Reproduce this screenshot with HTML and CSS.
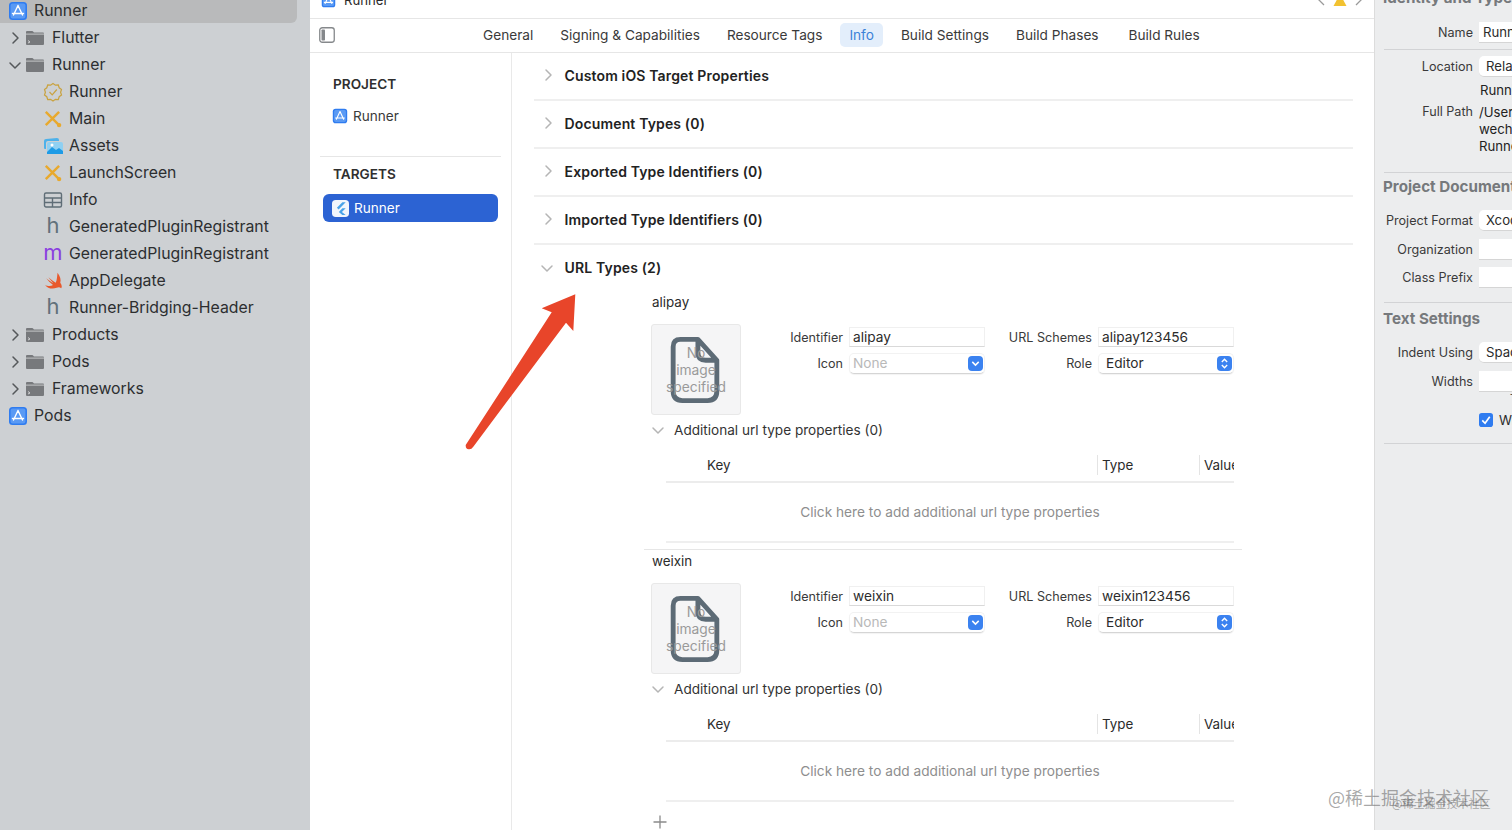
FILE: index.html
```html
<!DOCTYPE html>
<html lang="en">
<head>
    <meta charset="UTF-8">
    <title>Runner - Info</title>
    <link rel="stylesheet" href="styles.css">
</head>
<body>
    <svg class="defs" width="0" height="0">
        <symbol id="i-app" viewBox="0 0 20 20">
            <rect x="1" y="1" width="18" height="18" rx="3.5" fill="#2f7cf0"/>
            <rect x="2.6" y="2.6" width="14.8" height="14.8" rx="2" fill="#5a9af4"/>
            <path d="M10 4.5 L5.5 14 M10 4.5 L14.5 14 M4.5 12.5 H15.5" stroke="#fff" stroke-width="1.4" fill="none" stroke-linecap="round"/>
        </symbol>
        <symbol id="i-folder" viewBox="0 0 18 16">
            <path d="M0 2 Q0 1 1 1 H6 Q7 1 7.5 2 L8 2.5 H17 Q18 2.5 18 3.5 V14 Q18 15 17 15 H1 Q0 15 0 14 Z" fill="#77797c"/>
            <rect x="0" y="3.6" width="18" height="1" fill="#c5c7c9"/>
        </symbol>
        <symbol id="i-folder-t" viewBox="0 0 18 16">
            <use href="#i-folder"/>
            <path d="M2 10.5 L4 12 L2 13" stroke="#d8d9da" stroke-width="0.9" fill="none"/>
        </symbol>
        <symbol id="i-cross" viewBox="0 0 18 18">
            <path d="M2.5 2.5 L14 14 M14.5 2.5 L2.5 14.5" stroke="#e8a92e" stroke-width="2.2" fill="none"/>
            <circle cx="14.5" cy="14.5" r="2" fill="#e8a92e"/>
        </symbol>
        <symbol id="i-chev-r" viewBox="0 0 10 14">
            <path d="M3 2 L8 7 L3 12" fill="none" stroke="currentColor" stroke-width="1.5" stroke-linecap="round" stroke-linejoin="round"/>
        </symbol>
        <symbol id="i-chev-d" viewBox="0 0 14 10">
            <path d="M2 3 L7 8 L12 3" fill="none" stroke="currentColor" stroke-width="1.5" stroke-linecap="round" stroke-linejoin="round"/>
        </symbol>
        <symbol id="i-file" viewBox="0 0 50 68">
            <path d="M10 2.5 H28 L47.5 24 V56 Q47.5 65.5 38 65.5 H12 Q2.5 65.5 2.5 56 V10 Q2.5 2.5 10 2.5 Z M28 2.5 V16 Q28 24 36 24 H47.5" fill="none" stroke="#5d6b76" stroke-width="5" stroke-linejoin="round"/>
        </symbol>
    </svg>

    <div class="window">
        <!-- Navigator -->
        <aside class="sidebar">
            <div class="tree">
                <div class="row selected lvl0"><svg class="ic"><use href="#i-app"/></svg><span>Runner</span></div>
                <div class="row lvl1"><svg class="chev"><use href="#i-chev-r"/></svg><svg class="ic-folder"><use href="#i-folder-t"/></svg><span>Flutter</span></div>
                <div class="row lvl1"><svg class="chev-d"><use href="#i-chev-d"/></svg><svg class="ic-folder"><use href="#i-folder"/></svg><span>Runner</span></div>
                <div class="row lvl2">
                    <svg class="ic" viewBox="0 0 20 20"><path d="M10 1.5 L12.4 3.2 L15.3 3 L16.2 5.8 L18.5 7.5 L17.6 10.3 L18.5 13 L16.2 14.7 L15.3 17.5 L12.4 17.3 L10 19 L7.6 17.3 L4.7 17.5 L3.8 14.7 L1.5 13 L2.4 10.3 L1.5 7.5 L3.8 5.8 L4.7 3 L7.6 3.2 Z" fill="none" stroke="#c9a23f" stroke-width="1.2"/><path d="M6.5 10 L9.2 12.8 L13.8 7.5" fill="none" stroke="#c9a23f" stroke-width="1.2"/></svg>
                    <span>Runner</span>
                </div>
                <div class="row lvl2"><svg class="ic"><use href="#i-cross"/></svg><span>Main</span></div>
                <div class="row lvl2">
                    <svg class="ic" viewBox="0 0 20 20"><path d="M1 5 Q1 3 3 3 L14 2 Q16 2 16 4 V5 H5 Q3 5 3 7 V13 H2 Q1 13 1 12 Z" fill="#4db1ea"/><rect x="4" y="6" width="16" height="12" rx="2" fill="#8fd0f2"/><path d="M4 16 L9 11 L13 14 L16 12 L20 15 V18 H4 Z" fill="#1e9be6"/><circle cx="9" cy="9" r="1.5" fill="#fff"/></svg>
                    <span>Assets</span>
                </div>
                <div class="row lvl2"><svg class="ic"><use href="#i-cross"/></svg><span>LaunchScreen</span></div>
                <div class="row lvl2">
                    <svg class="ic" viewBox="0 0 20 20"><rect x="1.5" y="3" width="17" height="14" rx="1.5" fill="none" stroke="#5f6d77" stroke-width="1.4"/><path d="M1.5 8 H18.5 M1.5 12.5 H18.5 M9.5 8 V17" stroke="#5f6d77" stroke-width="1.4"/></svg>
                    <span>Info</span>
                </div>
                <div class="row lvl2"><b class="letter h">h</b><span>GeneratedPluginRegistrant</span></div>
                <div class="row lvl2"><b class="letter m">m</b><span>GeneratedPluginRegistrant</span></div>
                <div class="row lvl2">
                    <svg class="ic" viewBox="0 0 22 20"><path d="M16 1 C19 5 20 9 19 12 C21 15 21 17 20 18 C18.5 16.5 17 16.5 15 17.5 C10 19.5 5 18 2 14 C5 16 8.5 16 11 14.5 C8 12 5.5 9.5 3.5 7 C6.5 9.5 9 11 11.5 12.5 C9.5 10.5 7.5 8 6 6 C9 8.5 12 11 14 12 C15.5 9 15.5 5 16 1 Z" fill="#e8592c"/></svg>
                    <span>AppDelegate</span>
                </div>
                <div class="row lvl2"><b class="letter h">h</b><span>Runner-Bridging-Header</span></div>
                <div class="row lvl1"><svg class="chev"><use href="#i-chev-r"/></svg><svg class="ic-folder"><use href="#i-folder-t"/></svg><span>Products</span></div>
                <div class="row lvl1"><svg class="chev"><use href="#i-chev-r"/></svg><svg class="ic-folder"><use href="#i-folder"/></svg><span>Pods</span></div>
                <div class="row lvl1"><svg class="chev"><use href="#i-chev-r"/></svg><svg class="ic-folder"><use href="#i-folder-t"/></svg><span>Frameworks</span></div>
                <div class="row lvl0"><svg class="ic"><use href="#i-app"/></svg><span>Pods</span></div>
            </div>
        </aside>

        <!-- Editor -->
        <main class="editor">
            <div class="jump-bar">
                <div class="crumb"><svg class="crumb-icon"><use href="#i-app"/></svg><span>Runner</span></div>
                <div class="jump-right">
                    <svg class="nav-chev" viewBox="0 0 10 14"><path d="M8 2 L3 7 L8 12" fill="none" stroke="#9a9a9a" stroke-width="1.3"/></svg>
                    <svg class="warn" viewBox="0 0 14 14"><path d="M7 1 L13.5 13 H0.5 Z" fill="#f2c230"/></svg>
                    <svg class="nav-chev" viewBox="0 0 10 14"><path d="M2 2 L7 7 L2 12" fill="none" stroke="#9a9a9a" stroke-width="1.3"/></svg>
                </div>
            </div>
            <div class="tab-bar">
                <svg class="toggle" viewBox="0 0 16 16"><rect x="0.75" y="0.75" width="14.5" height="14.5" rx="2.5" fill="#fff" stroke="#85888b" stroke-width="1.3"/><rect x="2.5" y="2.5" width="3.5" height="11" rx="0.8" fill="#85888b"/></svg>
                <nav class="tabs">
                    <a>General</a>
                    <a>Signing &amp; Capabilities</a>
                    <a>Resource Tags</a>
                    <a class="active">Info</a>
                    <a>Build Settings</a>
                    <a>Build Phases</a>
                    <a>Build Rules</a>
                </nav>
            </div>
            <div class="editor-body">
                <div class="targets">
                    <h4 class="group-title">PROJECT</h4>
                    <div class="target"><svg class="target-icon"><use href="#i-app"/></svg><span>Runner</span></div>
                    <div class="group-sep"></div>
                    <h4 class="group-title">TARGETS</h4>
                    <div class="target current">
                        <svg class="flutter" viewBox="0 0 18 18"><rect width="18" height="18" rx="4" fill="#f2f6fc"/><path d="M11 2.5 H14.5 L7 10 L5.2 8.3 Z M11 8.7 H14.5 L10.5 12.7 L14.5 16 H11 L7.2 12.7 Z" fill="#4aa3e8"/></svg>
                        <span>Runner</span>
                    </div>
                </div>

                <div class="detail">
                    <div class="section"><svg class="sec-chev"><use href="#i-chev-r"/></svg><strong>Custom iOS Target Properties</strong></div>
                    <div class="section"><svg class="sec-chev"><use href="#i-chev-r"/></svg><strong>Document Types (0)</strong></div>
                    <div class="section"><svg class="sec-chev"><use href="#i-chev-r"/></svg><strong>Exported Type Identifiers (0)</strong></div>
                    <div class="section"><svg class="sec-chev"><use href="#i-chev-r"/></svg><strong>Imported Type Identifiers (0)</strong></div>
                    <div class="section open"><svg class="sec-chev-d"><use href="#i-chev-d"/></svg><strong>URL Types (2)</strong></div>

                    <div class="url-type">
                        <div class="url-name">alipay</div>
                        <div class="url-main">
                            <div class="image-box">
                                <svg class="file-icon"><use href="#i-file"/></svg>
                                <div class="no-image">No<br>image<br>specified</div>
                            </div>
                            <div class="url-form">
                                <label>Identifier</label><div class="field">alipay</div>
                                <label>URL Schemes</label><div class="field">alipay123456</div>
                                <label>Icon</label>
                                <div class="field select muted">None<i class="stepper"><svg viewBox="0 0 14 14"><path d="M4 5.5 L7 8.5 L10 5.5" fill="none" stroke="#fff" stroke-width="1.4"/></svg></i></div>
                                <label>Role</label>
                                <div class="field select pad">Editor<i class="stepper"><svg viewBox="0 0 14 14"><path d="M4.5 5.5 L7 3 L9.5 5.5 M4.5 8.5 L7 11 L9.5 8.5" fill="none" stroke="#fff" stroke-width="1.3"/></svg></i></div>
                            </div>
                        </div>
                        <div class="additional"><svg class="add-chev"><use href="#i-chev-d"/></svg><span>Additional url type properties (0)</span></div>
                        <div class="props">
                            <div class="props-head">
                                <div class="col-key">Key</div>
                                <div class="col-type">Type</div>
                                <div class="col-value">Value</div>
                            </div>
                            <div class="props-empty">Click here to add additional url type properties</div>
                        </div>
                    </div>

                    <div class="url-type">
                        <div class="url-name">weixin</div>
                        <div class="url-main">
                            <div class="image-box">
                                <svg class="file-icon"><use href="#i-file"/></svg>
                                <div class="no-image">No<br>image<br>specified</div>
                            </div>
                            <div class="url-form">
                                <label>Identifier</label><div class="field">weixin</div>
                                <label>URL Schemes</label><div class="field">weixin123456</div>
                                <label>Icon</label>
                                <div class="field select muted">None<i class="stepper"><svg viewBox="0 0 14 14"><path d="M4 5.5 L7 8.5 L10 5.5" fill="none" stroke="#fff" stroke-width="1.4"/></svg></i></div>
                                <label>Role</label>
                                <div class="field select pad">Editor<i class="stepper"><svg viewBox="0 0 14 14"><path d="M4.5 5.5 L7 3 L9.5 5.5 M4.5 8.5 L7 11 L9.5 8.5" fill="none" stroke="#fff" stroke-width="1.3"/></svg></i></div>
                            </div>
                        </div>
                        <div class="additional"><svg class="add-chev"><use href="#i-chev-d"/></svg><span>Additional url type properties (0)</span></div>
                        <div class="props">
                            <div class="props-head">
                                <div class="col-key">Key</div>
                                <div class="col-type">Type</div>
                                <div class="col-value">Value</div>
                            </div>
                            <div class="props-empty">Click here to add additional url type properties</div>
                        </div>
                    </div>
                    <svg class="plus" viewBox="0 0 14 14"><path d="M7 0.5 V13.5 M0.5 7 H13.5" stroke="#8a8a8a" stroke-width="1.3"/></svg>
                </div>
            </div>
        </main>

        <!-- Inspector -->
        <aside class="inspector">
            <h3 class="insp-title first">Identity and Type</h3>
            <div class="insp-row name-row"><label>Name</label><div class="insp-field">Runner</div></div>
            <div class="insp-sep"></div>
            <div class="insp-row loc-row"><label>Location</label><div class="insp-field round">Relative to Group</div></div>
            <div class="insp-text run-line">Runner</div>
            <div class="insp-row path-row">
                <label>Full Path</label>
                <div class="insp-text">/Users/<br>wechat/<br>Runner</div>
            </div>
            <div class="insp-sep sep-a"></div>
            <h3 class="insp-title">Project Document</h3>
            <div class="insp-row fmt-row"><label>Project Format</label><div class="insp-field round">Xcode 9.3</div></div>
            <div class="insp-row org-row"><label>Organization</label><div class="insp-field"></div></div>
            <div class="insp-row org-row"><label>Class Prefix</label><div class="insp-field"></div></div>
            <div class="insp-sep sep-b"></div>
            <h3 class="insp-title">Text Settings</h3>
            <div class="insp-row fmt-row"><label>Indent Using</label><div class="insp-field round">Spaces</div></div>
            <div class="insp-row org-row"><label>Widths</label><div class="insp-field"></div></div>
            <div class="tab-hint">Tab</div>
            <div class="check-row">
                <svg class="check" viewBox="0 0 15 15"><rect width="15" height="15" rx="3" fill="#2f7cf0"/><path d="M3.5 8 L6.5 11 L11.5 4" fill="none" stroke="#fff" stroke-width="1.8"/></svg>
                <span>Wrap lines</span>
            </div>
            <div class="insp-sep sep-c"></div>
        </aside>
    </div>

    <!-- Red annotation arrow drawn over the screenshot -->
    <svg class="arrow" viewBox="460 290 120 165"><path d="M575.3 294.3 L541.7 308.3 L551.7 312.3 L465.7 445 Q465.5 449.5 469 449.3 Q471.5 449.5 473.3 446.7 L566 322.7 L573.3 331 Z" fill="#e8452a"/></svg>

    <div class="mark mark-big">@稀土掘金技术社区</div>
    <div class="mark mark-small">@稀土掘金技术社区</div>
</body>
</html>
```

FILE: styles.css
```css
* {
    margin: 0;
    padding: 0;
    box-sizing: border-box;
}

html, body {
    width: 1512px;
    height: 830px;
    overflow: hidden;
}

body {
    font-family: Inter, "Noto Sans CJK SC", sans-serif;
    font-size: 13.2px;
    color: #2b2b2b;
    background-color: #fff;
    position: relative;
}

.defs {
    position: absolute;
}

.window {
    display: flex;
    height: 830px;
}

/* Navigator */
.sidebar {
    width: 310px;
    flex: none;
    background-color: #cdd0d3;
    overflow: hidden;
}

.tree {
    margin-top: -2px;
    padding-right: 13px;
}

.row {
    display: flex;
    align-items: center;
    height: 27px;
    font-size: 15.8px;
    color: #2c2e30;
}

.row.selected {
    height: 25px;
    margin-bottom: 1px;
    background-color: #b9babb;
    border-radius: 0 0 6px 0;
}

.lvl0 {
    padding-left: 8px;
}

.lvl0 .ic {
    margin-right: 6px;
}

.lvl1 {
    padding-left: 10px;
}

.lvl2 {
    padding-left: 43px;
}

.lvl2 .ic, .letter {
    width: 20px;
    margin-right: 6px;
}

.ic {
    width: 20px;
    height: 20px;
    flex: none;
}

.chev, .chev-d {
    color: #55585b;
    flex: none;
}

.chev {
    width: 10px;
    height: 14px;
}

.chev-d {
    width: 14px;
    height: 10px;
    margin-left: -2px;
    margin-right: -2px;
}

.ic-folder {
    width: 18px;
    height: 16px;
    margin: 0 8px 0 6px;
    flex: none;
}

.letter {
    display: block;
    font-size: 22px;
    font-weight: 400;
    text-align: center;
    line-height: 27px;
    margin-top: -3px;
}

.letter.h {
    color: #62717b;
}

.letter.m {
    color: #8a3fe0;
}

/* Editor */
.editor {
    flex: 1;
    min-width: 0;
    display: flex;
    flex-direction: column;
    background-color: #fff;
}

.jump-bar {
    height: 19px;
    flex: none;
    display: flex;
    justify-content: space-between;
    align-items: flex-end;
    padding: 0 10px 9px 11px;
    border-bottom: 1px solid #e6e6e6;
    overflow: hidden;
}

.crumb {
    display: flex;
    align-items: center;
    gap: 8px;
    height: 18px;
    flex: none;
}

.crumb-icon {
    width: 15px;
    height: 15px;
}

.jump-right {
    display: flex;
    align-items: center;
    gap: 7px;
    height: 18px;
    flex: none;
}

.nav-chev {
    width: 10px;
    height: 14px;
}

.warn {
    width: 14px;
    height: 14px;
}

.tab-bar {
    height: 34px;
    flex: none;
    display: flex;
    align-items: center;
    padding: 0 0 2px 9px;
    border-bottom: 1px solid #e6e6e6;
}

.toggle {
    width: 16px;
    height: 16px;
    flex: none;
}

.tabs {
    display: flex;
    align-items: center;
    margin-left: 139px;
    gap: 9px;
}

.tabs a {
    padding: 4px 9px;
    color: #3a3a3a;
    font-size: 13.65px;
    border-radius: 5px;
    white-space: nowrap;
}

.tabs a:last-child {
    margin-left: 3px;
}

.tabs a.active {
    background-color: #e3eefb;
    color: #3b82d8;
}

.editor-body {
    flex: 1;
    display: flex;
    min-height: 0;
}

.targets {
    width: 202px;
    flex: none;
    padding: 21px 13px 0 13px;
    border-right: 1px solid #e9e9e9;
}

.group-title {
    font-size: 13.6px;
    font-weight: 600;
    color: #2f2f2f;
    line-height: 20px;
    padding-left: 10px;
}

.target {
    display: flex;
    align-items: center;
    gap: 5px;
    height: 28px;
    margin-top: 8px;
    padding-left: 9px;
    font-size: 13.6px;
    color: #3a3a3a;
}

.target-icon {
    width: 16px;
    height: 16px;
}

.target.current {
    margin-top: 10px;
    background-color: #2c63d3;
    color: #fff;
    border-radius: 6px;
}

.flutter {
    width: 17px;
    height: 17px;
}

.group-sep {
    height: 1px;
    margin: 26px -3px 7px -3px;
    background-color: #e6e6e6;
}

.detail {
    flex: 1;
    min-width: 0;
    padding: 0 21px 0 22px;
}

.section {
    display: flex;
    align-items: center;
    height: 48px;
    padding-bottom: 1px;
    border-bottom: 2px solid #efefef;
    font-size: 14px;
    letter-spacing: 0.15px;
    color: #222;
}

.section strong {
    font-weight: 600;
}

.section.open {
    border-bottom: none;
    height: 46px;
}

.sec-chev, .sec-chev-d {
    color: #b5b5b5;
    flex: none;
}

.sec-chev {
    width: 10px;
    height: 14px;
    margin: -2px 11.5px 0 9px;
}

.sec-chev-d {
    width: 14px;
    height: 10px;
    margin: 0 10.5px 0 6px;
}

.url-type {
    height: 259px;
    margin-left: 110px;
    width: 598px;
    padding: 3px 0 0 7px;
    border-bottom: 1px solid #e6e6e6;
}

.url-type:last-of-type {
    border-bottom: none;
}

.url-name {
    line-height: 16px;
    font-size: 13.4px;
    padding-left: 1px;
}

.url-main {
    display: flex;
    margin-top: 14px;
}

.image-box {
    position: relative;
    width: 90px;
    height: 91px;
    flex: none;
    background-color: #f5f5f6;
    border: 1px solid #e8e8e8;
    border-radius: 3px;
}

.file-icon {
    position: absolute;
    left: 18px;
    top: 12px;
    width: 50px;
    height: 66px;
}

.no-image {
    position: absolute;
    left: 0;
    right: 0;
    top: 20px;
    font-size: 13.8px;
    line-height: 17px;
    text-align: center;
    color: #9a9a9a;
}

.url-form {
    display: grid;
    grid-template-columns: 102px 136px 101px 136px;
    grid-template-rows: 20px 21px;
    column-gap: 6px;
    row-gap: 6px;
    align-content: start;
    align-items: center;
    padding-top: 3px;
}

.url-form label {
    text-align: right;
    font-size: 12.6px;
    color: #3a3a3a;
}

.field {
    position: relative;
    height: 100%;
    line-height: 18px;
    padding-left: 3px;
    font-size: 13.7px;
    background-color: #fff;
    border: 1px solid #f0f0f0;
    border-bottom: 1px solid #d9d9d9;
    white-space: nowrap;
}

.field.select {
    border-radius: 5px;
    border-color: #f2f2f2;
    border-bottom-color: #d5d5d5;
    box-shadow: 0 1px 1px rgba(0, 0, 0, 0.05);
}

.field.pad {
    padding-left: 7px;
}

.field.muted {
    color: #b9b9b9;
}

.stepper {
    position: absolute;
    right: 1px;
    top: 2px;
    width: 15px;
    height: 15px;
    background-color: #3b82f0;
    border-radius: 4px;
    display: block;
}

.stepper svg {
    display: block;
    width: 15px;
    height: 15px;
}

.additional {
    display: flex;
    align-items: center;
    height: 16px;
    margin-top: 7px;
    font-size: 13.6px;
    color: #333;
}

.add-chev {
    width: 14px;
    height: 10px;
    color: #b5b5b5;
    flex: none;
    margin-right: 9px;
}

.props {
    margin: 11px 0 0 15px;
    width: 568px;
}

.props-head {
    display: flex;
    align-items: center;
    height: 34px;
    border-bottom: 2px solid #ececec;
    overflow: hidden;
    font-size: 13.4px;
}

.col-key {
    width: 431px;
    flex: none;
    padding-left: 41px;
}

.col-type, .col-value {
    border-left: 1px solid #e4e4e4;
    padding-left: 4px;
    line-height: 20px;
}

.col-type {
    width: 102px;
    flex: none;
}

.col-value {
    flex: 1;
    white-space: nowrap;
    overflow: hidden;
}

.props-empty {
    height: 60px;
    line-height: 58px;
    text-align: center;
    font-size: 13.7px;
    color: #8e8e8e;
    border-bottom: 2px solid #efefef;
}

.plus {
    display: block;
    width: 14px;
    height: 14px;
    margin: 6px 0 0 119px;
}

/* Inspector */
.inspector {
    width: 138px;
    flex: none;
    background-color: #ecedee;
    border-left: 1px solid #dcdcdc;
    padding-left: 8px;
    overflow: hidden;
    white-space: nowrap;
    font-size: 12.6px;
}

.insp-title {
    font-size: 15.2px;
    font-weight: 700;
    color: #76797c;
    line-height: 18px;
}

.insp-title.first {
    margin-top: -11px;
}

.insp-row {
    display: flex;
    align-items: center;
    gap: 6px;
    margin-left: -8px;
}

.insp-row label {
    width: 98px;
    flex: none;
    text-align: right;
    color: #3a3a3a;
}

.insp-field {
    width: 60px;
    height: 21px;
    line-height: 21px;
    flex: none;
    background-color: #fff;
    padding-left: 4px;
    font-size: 13.2px;
    border-bottom: 1px solid #d5d5d5;
}

.insp-field.round {
    border-radius: 5px 0 0 5px;
    padding-left: 7px;
}

.insp-text {
    font-size: 13.2px;
    color: #222;
    line-height: 17px;
}

.insp-sep {
    height: 1px;
    background-color: #d2d3d5;
    margin: 6px 0 0 1px;
}

.name-row {
    margin-top: 15px;
}

.loc-row {
    margin-top: 6px;
}

.run-line {
    margin: 5px 0 0 97px;
}

.path-row {
    align-items: flex-start;
    margin-top: 5px;
}

.sep-a {
    margin-top: 17px;
    margin-bottom: 5px;
}

.fmt-row {
    margin-top: 14px;
}

.org-row {
    margin-top: 7.5px;
}

.sep-b {
    margin-top: 14px;
    margin-bottom: 7px;
}

.tab-hint {
    margin: 0 0 0 127px;
    font-size: 10px;
    line-height: 12px;
}

.check-row {
    display: flex;
    align-items: center;
    gap: 6px;
    margin: 8.5px 0 0 96px;
    font-size: 13.2px;
}

.check {
    width: 14px;
    height: 14px;
    flex: none;
}

.sep-c {
    margin-top: 15px;
}

/* Overlays */
.arrow {
    position: absolute;
    left: 460px;
    top: 290px;
    width: 120px;
    height: 165px;
}

.mark {
    position: absolute;
    white-space: nowrap;
    font-family: "Noto Sans CJK SC", sans-serif;
}

.mark-big {
    left: 1328px;
    top: 784px;
    font-size: 18px;
    line-height: 26px;
    color: rgba(110, 110, 110, 0.6);
}

.mark-small {
    left: 1392px;
    top: 795px;
    font-size: 11px;
    line-height: 16px;
    color: rgba(90, 90, 90, 0.5);
}
```
